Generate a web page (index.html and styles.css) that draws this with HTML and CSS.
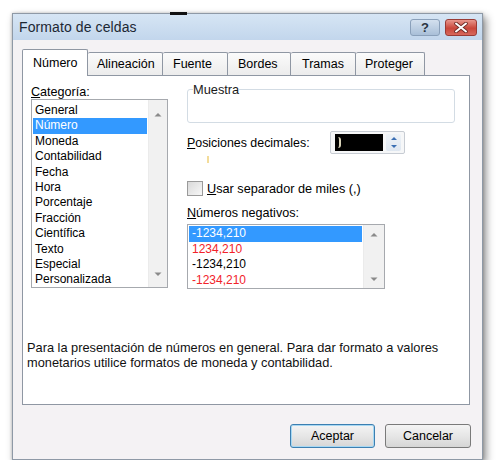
FILE: index.html
```html
<!DOCTYPE html>
<html lang="es">
<head>
<meta charset="utf-8">
<title>Formato de celdas</title>
<link rel="stylesheet" href="styles.css">
</head>
<body>
<div class="window">
  <span class="topmark"></span>
  <div class="titlebar">
    <span class="title">Formato de celdas</span>
    <div class="tb-buttons">
      <span class="tb-btn help">?</span>
      <span class="tb-btn close">
        <svg width="14" height="11" viewBox="0 0 14 11"><path d="M2 1.5 L12 9.5 M12 1.5 L2 9.5" stroke="#6b2a25" stroke-width="3.6" stroke-linecap="round"/><path d="M2 1.5 L12 9.5 M12 1.5 L2 9.5" stroke="#ffffff" stroke-width="2" stroke-linecap="round"/></svg>
      </span>
    </div>
  </div>
  <div class="content">
    <div class="tabs">
      <div class="tab active t-num">Número</div>
      <div class="tab t-ali">Alineación</div>
      <div class="tab t-fue">Fuente</div>
      <div class="tab t-bor">Bordes</div>
      <div class="tab t-tra">Tramas</div>
      <div class="tab t-pro">Proteger</div>
    </div>
    <div class="panel">
      <div class="columns">
        <div class="col-left">
          <div class="label"><u>C</u>ategoría:</div>
          <div class="listbox cat">
            <ul class="items">
              <li>General</li>
              <li class="sel">Número</li>
              <li>Moneda</li>
              <li>Contabilidad</li>
              <li>Fecha</li>
              <li>Hora</li>
              <li>Porcentaje</li>
              <li>Fracción</li>
              <li>Científica</li>
              <li>Texto</li>
              <li>Especial</li>
              <li>Personalizada</li>
            </ul>
            <div class="scrollbar">
              <svg width="8" height="5" viewBox="0 0 8 5"><path d="M0.5 4.5 L4 1 L7.5 4.5 Z" fill="#8a8a8a"/></svg>
              <svg width="8" height="5" viewBox="0 0 8 5"><path d="M0.5 0.5 L4 4 L7.5 0.5 Z" fill="#8a8a8a"/></svg>
            </div>
          </div>
        </div>
        <div class="col-right">
          <fieldset class="sample"><legend>Muestra</legend></fieldset>
          <div class="decimals">
            <span class="dec-label"><u>P</u>osiciones decimales:</span>
            <div class="spin">
              <div class="spin-field"><span class="caret"></span></div>
              <div class="spin-btns">
                <span class="arrow up"></span>
                <span class="arrow down"></span>
              </div>
            </div>
          </div>
          <div class="mark"></div>
          <div class="check"><span class="box"></span><span><u>U</u>sar separador de miles (,)</span></div>
          <div class="label neg-label"><u>N</u>úmeros negativos:</div>
          <div class="listbox neg">
            <ul class="items">
              <li class="sel">-1234,210</li>
              <li class="red">1234,210</li>
              <li>-1234,210</li>
              <li class="red">-1234,210</li>
            </ul>
            <div class="scrollbar">
              <svg width="8" height="5" viewBox="0 0 8 5"><path d="M0.5 4.5 L4 1 L7.5 4.5 Z" fill="#8a8a8a"/></svg>
              <svg width="8" height="5" viewBox="0 0 8 5"><path d="M0.5 0.5 L4 4 L7.5 0.5 Z" fill="#8a8a8a"/></svg>
            </div>
          </div>
        </div>
      </div>
      <p class="desc">Para la presentación de números en general. Para dar formato a valores monetarios utilice formatos de moneda y contabilidad.</p>
    </div>
    <div class="buttons">
      <button class="btn default">Aceptar</button>
      <button class="btn">Cancelar</button>
    </div>
  </div>
</div>
</body>
</html>
```

FILE: styles.css
```css
* { box-sizing: border-box; }
html, body { margin: 0; padding: 0; background: #ffffff; }
body {
  font-family: "Liberation Sans", Arial, sans-serif;
  font-size: 12px;
  color: #000;
}
.window {
  position: relative;
  margin: 13px 0 0 12px;
  width: 471px;
  height: 447px;
  border: 1px solid #8e99a6;
  background: #f4f2f4;
  box-shadow: 3px 4px 8px rgba(0,0,0,0.45), 0 0 3px rgba(0,0,0,0.2);
}
.topmark {
  position: absolute;
  left: 157px;
  top: -2px;
  width: 17px;
  height: 3px;
  background: #111;
}
.titlebar {
  height: 26px;
  display: flex;
  align-items: center;
  justify-content: space-between;
  padding: 0 5px 0 6px;
  background: linear-gradient(#d6e5f4, #c2d6ec);
}
.title {
  font-size: 14px;
  color: #1c2733;
  letter-spacing: 0.1px;
}
.tb-buttons { display: flex; gap: 5px; margin-top: 1px; }
.tb-btn {
  height: 17px;
  border-radius: 3px;
  display: flex;
  align-items: center;
  justify-content: center;
}
.help {
  width: 30px;
  border: 1px solid #8aa0ba;
  background: linear-gradient(#d3e0ee, #a9bfd8);
  font-weight: bold;
  font-size: 13px;
  color: #2b3440;
}
.close {
  width: 32px;
  border: 1px solid #9a3b35;
  background: linear-gradient(#e8978d, #c9473b 55%, #d7685c);
}
.content { padding: 9px 12px 0 9px; }
.tabs { display: flex; align-items: flex-end; height: 26px; position: relative; z-index: 1; }
.tab {
  height: 23px;
  padding: 0 0 0 10px;
  display: flex;
  align-items: center;
  border: 1px solid #8f97a3;
  border-bottom: none;
  border-left: none;
  background: linear-gradient(#fbfbfb, #ececec);
  border-radius: 2px 2px 0 0;
  font-size: 12.5px;
}
.tab.active {
  height: 27px;
  margin-bottom: -1px;
  background: #fff;
  border-left: 1px solid #8f97a3;
}
.t-num { width: 66px; }
.t-ali { width: 75px; padding-left: 9px; }
.t-fue { width: 65px; }
.t-bor { width: 63px; }
.t-tra { width: 65px; padding-left: 11px; }
.t-pro { width: 69px; padding-left: 9px; }
.panel {
  height: 330px;
  border: 1px solid #8f97a3;
  background: #fff;
  padding-top: 7px;
}
.columns { display: flex; gap: 19px; padding-left: 8px; }
.col-left { width: 137px; padding-top: 3px; }
.col-right { width: 268px; }
.label { line-height: 13px; font-size: 12.6px; white-space: nowrap; }
.listbox {
  display: flex;
  border: 1px solid #a6a9ae;
  background: #fff;
}
.items {
  list-style: none;
  margin: 0;
  padding: 3px 1px 0 1px;
  flex: 1;
}
.items li {
  height: 15.4px;
  line-height: 15.4px;
  padding-left: 2px;
  white-space: nowrap;
}
.items li.sel { background: #3399ff; color: #fff; }
.items li.red { color: #f2222a; }
.scrollbar {
  width: 19px;
  display: flex;
  flex-direction: column;
  justify-content: space-between;
  align-items: center;
  padding: 12px 0 10px;
  background: #f1f1f1;
  border-left: 1px solid #ebebeb;
}
.cat { height: 189px; }
.neg { height: 65px; width: 198px; }
.neg .items { padding-top: 1px; }
.neg .items li { height: 15.5px; line-height: 15.5px; padding-left: 3px; }
.neg .scrollbar { width: 21px; padding: 7px 0 6px; }
.sample {
  margin: 0;
  height: 40px;
  padding: 0 5px;
  border: 1px solid #d3dce4;
  border-radius: 3px;
}
.sample legend {
  padding: 0;
  line-height: 13px;
  font-size: 12.8px;
  color: #1a1a1a;
}
.decimals {
  display: flex;
  align-items: center;
  margin-top: 8px;
  height: 23px;
}
.dec-label { width: 143px; font-size: 12.4px; }
.spin {
  width: 75px;
  height: 23px;
  border: 1px solid #c7ccd3;
  border-radius: 2px;
  background: #f6f7f8;
  display: flex;
  align-items: center;
  padding: 2px 3px 2px 4px;
  gap: 3px;
}
.spin-field {
  width: 49px;
  height: 17px;
  background: #000;
  display: flex;
  align-items: center;
  padding-left: 3px;
}
.caret {
  width: 3px;
  height: 11px;
  border-right: 2px solid #d8d2b8;
  border-radius: 0 3px 3px 0;
}
.spin-btns {
  width: 15px;
  height: 17px;
  display: flex;
  flex-direction: column;
  justify-content: space-around;
  align-items: center;
  background: linear-gradient(#eef3f8, #dfe7f0);
  border-radius: 2px;
}
.arrow { width: 0; height: 0; border-left: 3px solid transparent; border-right: 3px solid transparent; }
.arrow.up { border-bottom: 3px solid #3b6fb3; }
.arrow.down { border-top: 3px solid #3b6fb3; }
.mark {
  width: 2px;
  height: 7px;
  margin: 2px 0 0 20px;
  background: #f3dc9a;
}
.check {
  display: flex;
  align-items: center;
  gap: 4px;
  margin-top: 18px;
  height: 15px;
  font-size: 12.7px;
  white-space: nowrap;
}
.box {
  width: 16px;
  height: 15px;
  flex: 0 0 16px;
  border: 1px solid #9a9a9a;
  background: linear-gradient(135deg, #d9d9d9, #f7f7f7);
}
.neg-label { margin-top: 11px; margin-bottom: 4px; }
.desc {
  margin: 51px 0 0 0;
  padding-left: 4px;
  line-height: 15px;
  width: 446px;
  font-size: 12.8px;
  color: #111;
}
.buttons {
  display: flex;
  justify-content: flex-end;
  gap: 10px;
  margin-top: 19px;
  margin-right: -1px;
}
.btn {
  width: 86px;
  height: 24px;
  font-family: "Liberation Sans", Arial, sans-serif;
  font-size: 12.5px;
  color: #000;
  border: 1px solid #7a7a7a;
  border-radius: 3px;
  background: linear-gradient(#f4f4f4, #e6e6e6 50%, #d6d6d6);
  padding: 0;
}
.btn.default {
  width: 85px;
  border-color: #3c7fb1;
  box-shadow: inset 0 0 0 1px #a7d8f3;
}
```
